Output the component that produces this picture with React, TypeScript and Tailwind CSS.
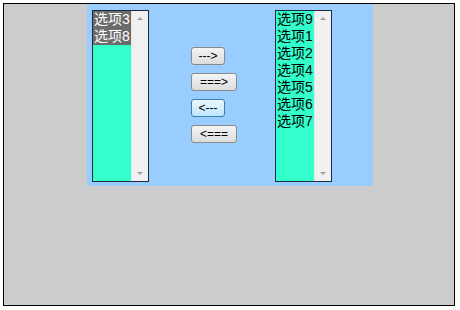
const leftItems = ["选项3", "选项8"];
const rightItems = ["选项9", "选项1", "选项2", "选项4", "选项5", "选项6", "选项7"];

function ListBox({ items, selected }: { items: string[]; selected?: boolean }) {
  return (
    <div className="flex w-[57px] h-[172px] border border-[#1e2a3a] bg-[#33ffcc]">
      <div className="flex-1 flex flex-col">
        {items.map((item) => (
          <div
            key={item}
            className={
              selected
                ? "h-[17px] leading-[17px] pl-[1px] bg-[#6b6b6b] text-white text-[14px]"
                : "h-[17px] leading-[17px] pl-[1px] text-black text-[14px]"
            }
          >
            {item}
          </div>
        ))}
      </div>
      <div className="w-[17px] bg-[#f0f0f0] border-l border-[#e6e6e6] flex flex-col justify-between items-center py-[6px]">
        <div className="w-0 h-0 border-l-[3px] border-r-[3px] border-b-[3px] border-l-transparent border-r-transparent border-b-[#a0a0a0]" />
        <div className="w-0 h-0 border-l-[3px] border-r-[3px] border-t-[3px] border-l-transparent border-r-transparent border-t-[#a0a0a0]" />
      </div>
    </div>
  );
}

function Btn({ label, focused, wide }: { label: string; focused?: boolean; wide?: boolean }) {
  return (
    <button
      className={
        (wide ? "w-[46px] " : "w-[34px] ") +
        (focused
          ? "border-[#3c7fb1] bg-gradient-to-b from-[#eaf6fd] to-[#bee6fd] "
          : "border-[#8a8a8a] bg-gradient-to-b from-[#f4f4f4] to-[#dcdcdc] ") +
        "h-[18px] border rounded-[3px] text-[12px] leading-none text-black"
      }
    >
      {label}
    </button>
  );
}

export default function App() {
  return (
    <div
      className="p-[3px] w-[460px] h-[310px] bg-white"
      style={{ fontFamily: '"Liberation Sans", "Noto Sans CJK SC", sans-serif' }}
    >
      <div className="w-[452px] h-[303px] border border-black bg-[#cccccc] pl-[83px]">
        <div className="w-[286px] h-[182px] bg-[#99ccff] flex items-start pl-[5px] pt-[6px]">
          <ListBox items={leftItems} selected />
          <div className="ml-[42px] mt-[37px] flex flex-col gap-[8px] w-[46px]">
            <Btn label="--->" />
            <Btn label="===>" wide />
            <Btn label="<---" focused />
            <Btn label="<===" wide />
          </div>
          <div className="ml-[38px]">
            <ListBox items={rightItems} />
          </div>
        </div>
      </div>
    </div>
  );
}
